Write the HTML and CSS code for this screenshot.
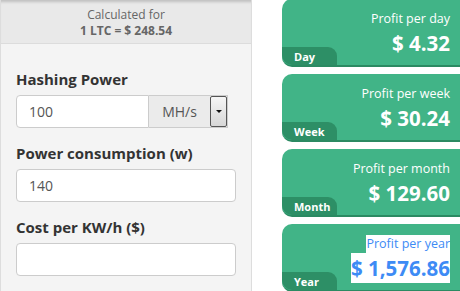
FILE: index.html
```html
<!DOCTYPE html>
<html lang="en">
<head>
    <meta charset="UTF-8">
    <meta name="viewport" content="width=device-width, initial-scale=1.0">
    <title>Mining Profit Calculator</title>
    <link rel="stylesheet" href="styles.css">
</head>
<body>
    <div class="page">
        <div class="calc">
            <div class="rate">
                <div>Calculated for</div>
                <div class="rate-value">1 LTC = $ 248.54</div>
            </div>
            <div class="form">
                <div class="field">
                    <label>Hashing Power</label>
                    <div class="input-group">
                        <div class="input input-left">100</div>
                        <div class="unit">
                            <span class="unit-text">MH/s</span>
                            <span class="unit-btn"><span class="caret"></span></span>
                        </div>
                    </div>
                </div>
                <div class="field">
                    <label>Power consumption (w)</label>
                    <div class="input">140</div>
                </div>
                <div class="field">
                    <label>Cost per KW/h ($)</label>
                    <div class="input"></div>
                </div>
            </div>
        </div>

        <div class="results">
            <div class="card">
                <div class="card-title">Profit per day</div>
                <div class="card-amount">$ 4.32</div>
                <div class="tab">Day</div>
            </div>
            <div class="card">
                <div class="card-title">Profit per week</div>
                <div class="card-amount">$ 30.24</div>
                <div class="tab">Week</div>
            </div>
            <div class="card">
                <div class="card-title">Profit per month</div>
                <div class="card-amount">$ 129.60</div>
                <div class="tab">Month</div>
            </div>
            <div class="card">
                <div class="card-title"><span class="sel">Profit per year</span></div>
                <div class="card-amount"><span class="sel">$ 1,576.86</span></div>
                <div class="tab">Year</div>
            </div>
        </div>
    </div>
</body>
</html>
```

FILE: styles.css
```css
body {
    font-family: 'Open Sans', 'Liberation Sans', sans-serif;
    margin: 0;
    background: white;
    color: #333;
    overflow: hidden;
}
.page {
    display: flex;
    gap: 30px;
    height: 100vh;
}
.calc {
    width: 250px;
    flex: none;
    background: #f4f4f4;
    border-left: 1px solid #ddd;
    border-right: 1px solid #ddd;
}
.rate {
    background: #e9e9e9;
    border-bottom: 1px solid #dcdcdc;
    box-shadow: inset 0 4px 3px -2px rgba(0,0,0,0.18);
    text-align: center;
    font-size: 12px;
    line-height: 16px;
    color: #666;
    padding: 7px 0 4px;
}
.rate-value {
    font-weight: bold;
}
.form {
    padding: 25px 15px 0;
}
.field {
    margin-bottom: 15px;
}
label {
    display: block;
    font-size: 15px;
    font-weight: bold;
    line-height: 20px;
    margin-bottom: 6px;
    color: #333;
}
.input {
    height: 33px;
    box-sizing: border-box;
    background: white;
    border: 1px solid #ccc;
    border-radius: 4px;
    padding: 0 12px;
    font-size: 14px;
    line-height: 31px;
    color: #555;
}
.input-group {
    display: flex;
    width: 212px;
}
.input-left {
    flex: 1;
    border-radius: 4px 0 0 4px;
}
.unit {
    display: flex;
    align-items: stretch;
    height: 33px;
    box-sizing: border-box;
    width: 79px;
    background: #ebebeb;
    border: 1px solid #ccc;
    border-left: none;
}
.unit-text {
    flex: 1;
    text-align: center;
    font-size: 14px;
    line-height: 31px;
    color: #555;
}
.unit-btn {
    width: 15px;
    display: flex;
    align-items: center;
    justify-content: center;
    background: linear-gradient(#f6f6f6, #d6d6d6);
    border: 1px solid #555;
    border-radius: 2px;
}
.caret {
    border-left: 3px solid transparent;
    border-right: 3px solid transparent;
    border-top: 3px solid #111;
}
.results {
    flex: 1;
    display: flex;
    flex-direction: column;
    gap: 7px;
    margin-top: -1px;
}
.card {
    position: relative;
    height: 68px;
    flex: none;
    box-sizing: border-box;
    background: #41b487;
    border-bottom: 2px solid #2b8a62;
    border-radius: 10px 0 0 10px;
    text-align: right;
    padding: 11px 10px 0 0;
    color: white;
}
.card-title {
    font-size: 12.5px;
    line-height: 18px;
}
.card-amount {
    font-size: 20.5px;
    font-weight: bold;
    line-height: 30px;
}
.sel {
    display: inline-block;
    background: white;
    color: #3d8bf5;
}
.tab {
    position: absolute;
    left: 0;
    bottom: 0;
    width: 55px;
    height: 18px;
    box-sizing: border-box;
    padding-left: 12px;
    background: #2d8f66;
    border-radius: 0 9px 0 10px;
    text-align: left;
    font-size: 11px;
    font-weight: bold;
    line-height: 19px;
}
```
